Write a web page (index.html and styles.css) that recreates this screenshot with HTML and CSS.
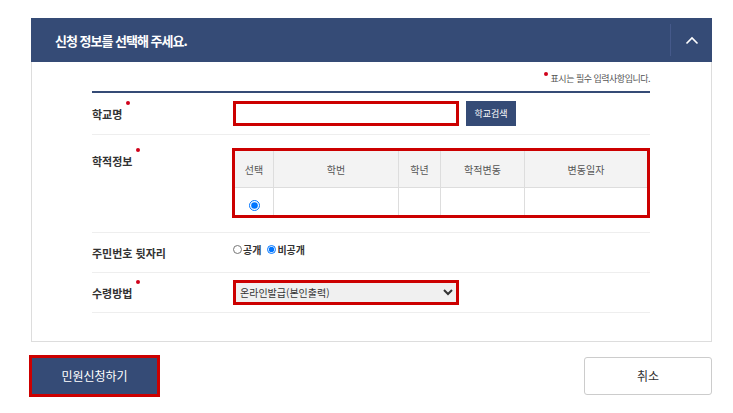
FILE: index.html
```html
<!DOCTYPE html>
<html lang="ko">
<head>
  <meta charset="UTF-8">
  <title>민원신청</title>
  <link rel="stylesheet" href="styles.css">
</head>
<body>

<div class="apply-box">
  <div class="apply-title">
    <h2>신청 정보를 선택해 주세요.</h2>
    <a href="javascript:;" class="fold-btn">
      <svg width="14" height="9" viewBox="0 0 14 9"><path d="M1.5 7.5 L7 2 L12.5 7.5" fill="none" stroke="#ffffff" stroke-width="1.6"/></svg>
    </a>
  </div>
  <div class="apply-body">
    <p class="need-txt"><span class="dot"></span>표시는 필수 입력사항입니다.</p>
    <div class="form-list">
      <div class="form-row">
        <div class="form-label"><span class="need">학교명</span></div>
        <div class="form-cont">
          <input type="text" class="txt-input" id="schoolName">
          <a href="javascript:;" class="btn-search">학교검색</a>
        </div>
      </div>
      <div class="form-row row-top">
        <div class="form-label"><span class="need">학적정보</span></div>
        <div class="form-cont">
          <table class="hak-table">
            <colgroup>
              <col style="width:40px">
              <col style="width:125px">
              <col style="width:42px">
              <col style="width:84px">
              <col>
            </colgroup>
            <thead>
              <tr><th>선택</th><th>학번</th><th>학년</th><th>학적변동</th><th>변동일자</th></tr>
            </thead>
            <tbody>
              <tr><td><input type="radio" name="hak" checked class="radio"></td><td></td><td></td><td></td><td></td></tr>
            </tbody>
          </table>
        </div>
      </div>
      <div class="form-row row-jumin">
        <div class="form-label"><span>주민번호 뒷자리</span></div>
        <div class="form-cont">
          <label class="radio-item"><input type="radio" name="jumin" class="radio-sm">공개</label>
          <label class="radio-item"><input type="radio" name="jumin" class="radio-sm" checked>비공개</label>
        </div>
      </div>
      <div class="form-row">
        <div class="form-label"><span class="need">수령방법</span></div>
        <div class="form-cont">
          <select class="sel">
            <option>온라인발급(본인출력)</option>
          </select>
        </div>
      </div>
    </div>
  </div>
</div>

<div class="btn-area">
  <a href="javascript:;" class="btn-apply">민원신청하기</a>
  <a href="javascript:;" class="btn-cancel">취소</a>
</div>

</body>
</html>
```

FILE: styles.css
```css
* {
  margin: 0;
  padding: 0;
  box-sizing: border-box;
}

body {
  font-family: "Noto Sans CJK KR", "Noto Sans", sans-serif;
  color: #333333;
  background: #ffffff;
  padding-top: 18px;
}

a {
  text-decoration: none;
}

.apply-box {
  width: 681px;
  margin-left: 31px;
}

.apply-title {
  height: 44px;
  background: #354b76;
  display: flex;
  align-items: center;
  justify-content: space-between;
}

.apply-title h2 {
  font-size: 13px;
  font-weight: bold;
  color: #ffffff;
  padding-left: 24px;
  letter-spacing: -1px;
}

.fold-btn {
  width: 42px;
  height: 32px;
  border-left: 1px solid #45598a;
  display: flex;
  align-items: center;
  justify-content: center;
}

.apply-body {
  border: 1px solid #dddddd;
  border-top: 0;
  height: 280px;
  padding: 0 61px 0 60px;
}

.need-txt {
  height: 29px;
  text-align: right;
  font-size: 9px;
  color: #555555;
  padding-top: 10px;
  letter-spacing: -0.5px;
}

.need-txt .dot {
  display: inline-block;
  width: 4px;
  height: 4px;
  border-radius: 50%;
  background: #d0021b;
  vertical-align: top;
  margin: 0 3px 0 0;
}

.form-list {
  border-top: 2px solid #354b76;
}

.form-row {
  display: flex;
  align-items: center;
  border-bottom: 1px solid #eeeeee;
  min-height: 40px;
}

.form-row:first-child {
  height: 42px;
}

.form-row.row-top {
  align-items: flex-start;
  padding: 13px 0 14px;
}

.form-label {
  width: 141px;
  font-size: 11px;
  font-weight: bold;
  color: #333333;
}

.row-top .form-label {
  padding-top: 5px;
}

.form-label .need {
  position: relative;
}

.form-label .need::after {
  content: "";
  position: absolute;
  right: -8px;
  top: -5px;
  width: 4px;
  height: 4px;
  border-radius: 50%;
  background: #d0021b;
}

.form-cont {
  flex: 1;
  display: flex;
  align-items: center;
}

.txt-input {
  width: 226px;
  height: 25px;
  border: 3px solid #cc0000;
  background: #ffffff;
}

.btn-search {
  margin-left: 7px;
  height: 25px;
  width: 50px;
  line-height: 25px;
  text-align: center;
  background: #354b76;
  color: #ffffff;
  font-size: 9px;
}

.hak-table {
  width: 418px;
  border-collapse: collapse;
  border: 3px solid #cc0000;
  table-layout: fixed;
}

.hak-table th {
  height: 38px;
  background: #f3f3f3;
  font-size: 10px;
  font-weight: normal;
  color: #555555;
  border-left: 1px solid #dddddd;
  border-bottom: 1px solid #dddddd;
}

.hak-table td {
  height: 29px;
  text-align: center;
  border-left: 1px solid #dddddd;
}

.hak-table th:first-child,
.hak-table td:first-child {
  border-left: 0;
}

.radio {
  width: 11px;
  height: 11px;
  vertical-align: middle;
  margin-top: 2px;
}

.row-jumin .form-cont {
  padding-bottom: 6px;
}

.radio-item {
  font-size: 10px;
  font-weight: bold;
  color: #333333;
  margin-right: 6px;
  display: flex;
  align-items: center;
}

.radio-sm {
  width: 9px;
  height: 9px;
  margin: 0 1px 0 0;
}

.sel {
  width: 226px;
  height: 25px;
  border: 3px solid #cc0000;
  font-family: "Noto Sans CJK KR", sans-serif;
  font-size: 10px;
  color: #333333;
  background: #f0f0f0;
  padding-left: 0;
}

.btn-area {
  width: 683px;
  margin: 13px 0 0 29px;
  display: flex;
  justify-content: space-between;
  align-items: center;
}

.btn-apply {
  width: 131px;
  height: 42px;
  line-height: 36px;
  text-align: center;
  background: #354b76;
  border: 3px solid #cc0000;
  color: #ffffff;
  font-size: 12px;
}

.btn-cancel {
  width: 128px;
  height: 38px;
  line-height: 36px;
  text-align: center;
  background: #ffffff;
  border: 1px solid #cccccc;
  border-radius: 3px;
  color: #333333;
  font-size: 12px;
}
```
